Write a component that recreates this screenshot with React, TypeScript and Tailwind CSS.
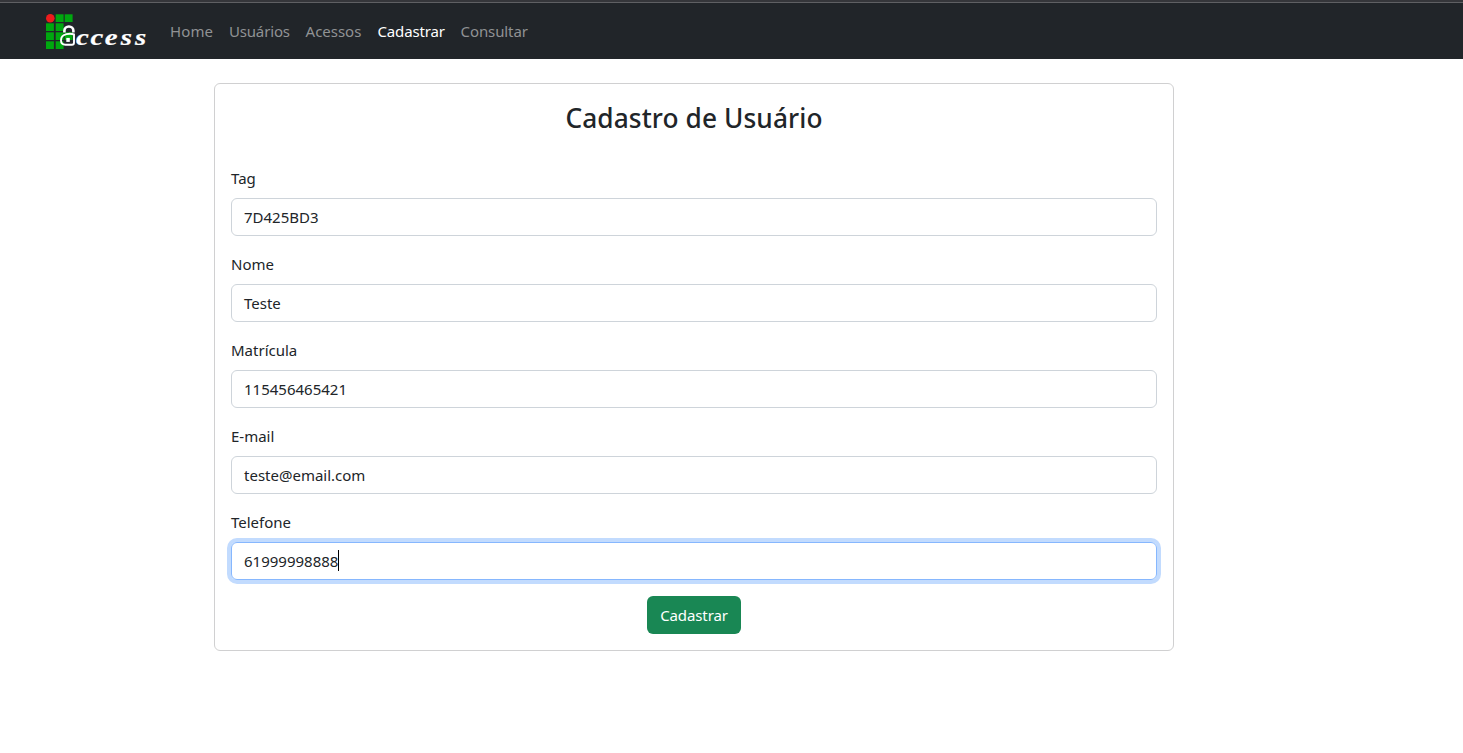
const fields = [
  { id: "tag", label: "Tag", value: "7D425BD3" },
  { id: "nome", label: "Nome", value: "Teste" },
  { id: "matricula", label: "Matrícula", value: "115456465421" },
  { id: "email", label: "E-mail", value: "teste@email.com" },
  { id: "telefone", label: "Telefone", value: "61999998888", focused: true },
];

const links = [
  { label: "Home", style: "w-[43px] tracking-[0.1px]" },
  { label: "Usuários", style: "w-[60.8px] tracking-[-0.15px]" },
  { label: "Acessos", style: "w-[56px] tracking-[-0.02px]" },
  { label: "Cadastrar", style: "w-[67.2px] tracking-[-0.14px]", active: true },
  { label: "Consultar", style: "w-[68px] tracking-[-0.1px]" },
];

const squares = [
  [55.7, 14.3], [64.7, 14.3],
  [46, 23.3], [55.7, 23.3],
  [46, 32.3], [55.7, 32.3], [64.7, 32.3],
  [46, 41.3], [55.7, 41.3],
];

function Logo() {
  return (
    <svg width="110" height="44" viewBox="42 9 110 44" className="block shrink-0" aria-label="Access">
      <circle cx="50.3" cy="18.3" r="4.3" fill="#ee1c1c" />
      {squares.map(([x, y]) => (
        <rect key={`${x}-${y}`} x={x} y={y} width="7.9" height="7.7" fill="#00a80f" />
      ))}
      <path d="M64.4 32.4v-1.6a4.500 4.300 0 0 1 9 0v1.600" fill="none" stroke="#fff" strokeWidth="2.6" />
      <path d="M74 34.500c-2-.8-5-.9-7.500-.3c-3.500.8-5.500 3.200-5.500 6c0 3 1.700 4.500 4.500 4.500h6.500q2 0 2-2z" fill="none" stroke="#fff" strokeWidth="1.9" />
      <path d="M66.300 37.900h3.500v4h-3.500z" fill="#fff" />
      <text transform="translate(76 44.8) scale(1.2 1)" x="0 12 24 37.2 49.2" y="0" fill="#fff" stroke="#fff" strokeWidth="0.2" fontFamily="Liberation Serif" fontStyle="italic" fontWeight="700" fontSize="24">ccess</text>
    </svg>
  );
}

export default function App() {
  return (
    <div className="flex h-[753px] flex-col bg-white font-['Noto_Sans',sans-serif] text-[15px] leading-6 text-[#212529]">
      <div className="h-[3px] border-b border-[#5f6063] bg-[#35363a]" />
      <nav className="flex h-14 items-center bg-[#212529] pl-[42px]">
        <Logo />
        <ul className="ml-[18px] flex gap-[15.9px]">
          {links.map((l) => (
            <li key={l.label} className={`${l.style} whitespace-nowrap ${l.active ? "text-white" : "text-[#909294]"}`}>
              {l.label}
            </li>
          ))}
        </ul>
      </nav>
      <main className="mt-6 ml-[214px] h-[568px] w-[960px] rounded-md border border-[#d0d0d1] p-4">
        <h1 className="mb-[31px] flex h-[35px] items-end justify-center text-[26.25px] leading-[34px] font-medium tracking-[0.1px]">Cadastro de Usuário</h1>
        <form>
          {fields.map((f) => (
            <div key={f.id} className="mb-4">
              <div className="mb-2 h-6">{f.label}</div>
              <div
                className={`flex h-[38px] items-center rounded-md border px-3 ${
                  f.focused ? "border-[#86b7fe] ring-4 ring-[#c2dbfe]" : "border-[#ced4da]"
                }`}
              >
                {f.value}
                {f.focused && <span className="mb-0.5 h-[21px] w-px bg-black" />}
              </div>
            </div>
          ))}
          <button type="button" className="mx-auto flex h-[38px] w-[94px] items-center justify-center rounded-md bg-[#198754] tracking-[-0.1px] text-white">
            Cadastrar
          </button>
        </form>
      </main>
    </div>
  );
}
